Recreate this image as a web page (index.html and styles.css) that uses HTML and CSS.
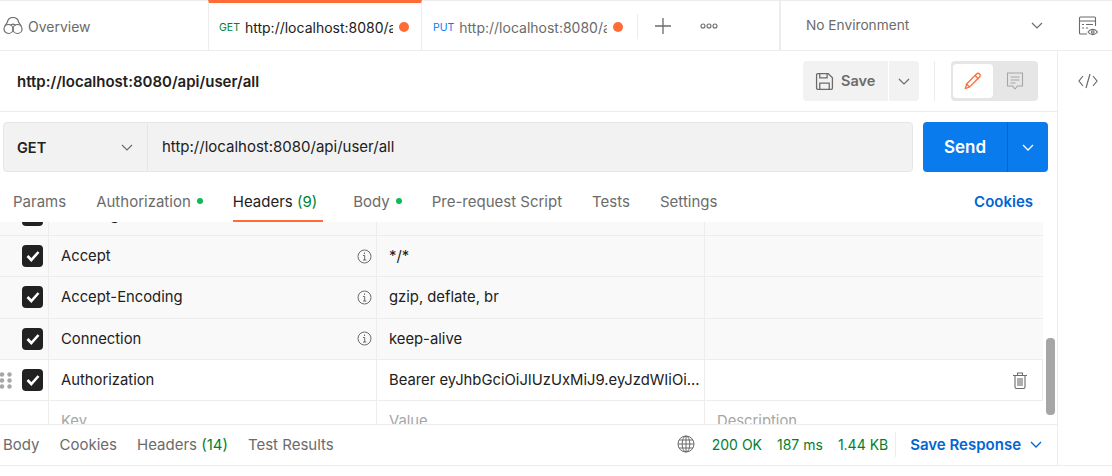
FILE: index.html
```html
<!DOCTYPE html>
<html>

<head>
  <title>Postman</title>
  <link rel="stylesheet" href="styles.css">
</head>

<body>
  <div id="topbar">
    <div class="overview">
      <svg class="ico-binoc" width="20" height="18" viewBox="0 0 20 18" fill="none" stroke="#6b6b6b" stroke-width="1.2">
        <circle cx="5.5" cy="12" r="4.5" />
        <circle cx="14.5" cy="12" r="4.5" />
        <path d="M1.500 9.500 4.500 5a5.500 4.500 0 0 1 11 0l3 4.500M7.500 8.500a3 3 0 0 1 5 0" />
      </svg>
      <span>Overview</span>
    </div>
    <div class="tab active">
      <span class="method get">GET</span>
      <span class="tab-url">http://localhost:8080/api/user/all</span>
      <span class="tab-dot"></span>
    </div>
    <div class="tab">
      <span class="method put">PUT</span>
      <span class="tab-url">http://localhost:8080/api/user/all</span>
      <span class="tab-dot"></span>
    </div>
    <div class="tab-actions">
      <svg width="16" height="16" viewBox="0 0 16 16" stroke="#6b6b6b" stroke-width="1.3">
        <path d="M8 0v16M0 8h16" />
      </svg>
      <svg width="18" height="6" viewBox="0 0 18 6" fill="none" stroke="#6b6b6b" stroke-width="1.1">
        <circle cx="3" cy="3" r="2" />
        <circle cx="9" cy="3" r="2" />
        <circle cx="15" cy="3" r="2" />
      </svg>
    </div>
    <div class="env">
      <span>No Environment</span>
      <svg class="chev" width="12" height="7" viewBox="0 0 12 7" fill="none" stroke="#6b6b6b" stroke-width="1.2">
        <path d="M1 1l5 5 5-5" />
      </svg>
    </div>
    <div class="env-icon">
      <svg width="20" height="20" viewBox="0 0 20 20" fill="none" stroke="#6b6b6b" stroke-width="1.1">
        <path d="M9 18H2.500a1 1 0 0 1-1-1V2a1 1 0 0 1 1-1h14a1 1 0 0 1 1 1v8" />
        <path d="M1.500 5h16M4 8.500h2M8 8.500h7M4 12h2M8 12h2" />
        <path d="M10 16c2.500-3.500 7-3.500 9.500 0-2.500 3.500-7 3.500-9.500 0z" />
        <circle cx="14.800" cy="16" r="1.300" />
      </svg>
    </div>
  </div>

  <div id="workspace">
    <div id="main">
      <div id="request-head">
        <span class="req-title">http://localhost:8080/api/user/all</span>
        <div class="head-actions">
          <div class="save-btn">
            <svg width="19" height="19" viewBox="0 0 18 18" fill="none" stroke="#6b6b6b" stroke-width="1.2">
              <path d="M1.500 2.500a1 1 0 0 1 1-1h10l4 4v10a1 1 0 0 1-1 1h-13a1 1 0 0 1-1-1z" />
              <path d="M4.500 1.500v4h7v-4M4.500 16.500v-6h9v6" />
            </svg>
            <span>Save</span>
          </div>
          <div class="save-more">
            <svg width="12" height="7" viewBox="0 0 12 7" fill="none" stroke="#6b6b6b" stroke-width="1.2">
              <path d="M1 1l5 5 5-5" />
            </svg>
          </div>
          <div class="head-divider"></div>
          <div class="mode-toggle">
            <div class="mode on">
              <svg width="18" height="18" viewBox="0 0 18 18" fill="none" stroke="#ff6c37" stroke-width="1.3">
                <path d="M1.500 16.500l1-4.500L12.500 2a2 2 0 0 1 3 3l-10 10z" />
                <path d="M11 3.500l3.500 3.500M2.500 12l3 3" />
              </svg>
            </div>
            <div class="mode">
              <svg width="18" height="19" viewBox="0 0 18 19" fill="none" stroke="#a6a6a6" stroke-width="1.1">
                <path d="M1.500 1h15v13h-5l-2.500 3-2.500-3h-5z" />
                <path d="M4.500 5h9M4.500 8h9M4.500 11h5" />
              </svg>
            </div>
          </div>
        </div>
      </div>

      <div id="url-row">
        <div class="url-box">
          <div class="method-select">
            <span>GET</span>
            <svg width="12" height="7" viewBox="0 0 12 7" fill="none" stroke="#6b6b6b" stroke-width="1.2">
              <path d="M1 1l5 5 5-5" />
            </svg>
          </div>
          <span class="url-text">http://localhost:8080/api/user/all</span>
        </div>
        <div class="send-btn">
          <span class="send-label">Send</span>
          <span class="send-more">
            <svg width="12" height="7" viewBox="0 0 12 7" fill="none" stroke="#fff" stroke-width="1.3">
              <path d="M1 1l5 5 5-5" />
            </svg>
          </span>
        </div>
      </div>

      <div id="req-tabs">
        <span class="req-tab">Params</span>
        <span class="req-tab">Authorization<i class="dot"></i></span>
        <span class="req-tab current">Headers <em>(9)</em></span>
        <span class="req-tab">Body<i class="dot"></i></span>
        <span class="req-tab">Pre-request Script</span>
        <span class="req-tab">Tests</span>
        <span class="req-tab">Settings</span>
        <span class="cookies">Cookies</span>
      </div>

      <div id="table-wrap">
        <div id="table">
          <div class="row first grey">
            <div class="cell check"><span class="box"><svg width="14" height="12" viewBox="0 0 14 12" fill="none" stroke="#fff" stroke-width="2.600"><path d="M1.500 6l3.800 4L12.500 2" /></svg></span></div>
            <div class="cell key">User-Agent</div>
            <div class="cell value">PostmanRuntime/7.29.0</div>
            <div class="cell desc"></div>
          </div>
          <div class="row grey">
            <div class="cell check"><span class="box"><svg width="14" height="12" viewBox="0 0 14 12" fill="none" stroke="#fff" stroke-width="2.600"><path d="M1.500 6l3.800 4L12.500 2" /></svg></span></div>
            <div class="cell key">Accept<svg class="info" width="15" height="15" viewBox="0 0 15 15" fill="none" stroke="#6b6b6b"><circle cx="7.500" cy="7.500" r="6.500" /><path d="M6 6.500h1.700V11M6 11h3.300M7.500 3.500v1.500" /></svg></div>
            <div class="cell value">*/*</div>
            <div class="cell desc"></div>
          </div>
          <div class="row grey">
            <div class="cell check"><span class="box"><svg width="14" height="12" viewBox="0 0 14 12" fill="none" stroke="#fff" stroke-width="2.600"><path d="M1.500 6l3.800 4L12.500 2" /></svg></span></div>
            <div class="cell key">Accept-Encoding<svg class="info" width="15" height="15" viewBox="0 0 15 15" fill="none" stroke="#6b6b6b"><circle cx="7.500" cy="7.500" r="6.500" /><path d="M6 6.500h1.700V11M6 11h3.300M7.500 3.500v1.500" /></svg></div>
            <div class="cell value">gzip, deflate, br</div>
            <div class="cell desc"></div>
          </div>
          <div class="row grey">
            <div class="cell check"><span class="box"><svg width="14" height="12" viewBox="0 0 14 12" fill="none" stroke="#fff" stroke-width="2.600"><path d="M1.500 6l3.800 4L12.500 2" /></svg></span></div>
            <div class="cell key">Connection<svg class="info" width="15" height="15" viewBox="0 0 15 15" fill="none" stroke="#6b6b6b"><circle cx="7.500" cy="7.500" r="6.500" /><path d="M6 6.500h1.700V11M6 11h3.300M7.500 3.500v1.500" /></svg></div>
            <div class="cell value">keep-alive</div>
            <div class="cell desc"></div>
          </div>
          <div class="row outlined">
            <div class="cell check">
              <svg class="drag" width="12" height="17" viewBox="0 0 12 17" fill="#a6a6a6">
                <circle cx="2" cy="2.500" r="2.200" /><circle cx="9.500" cy="2.500" r="2.200" />
                <circle cx="2" cy="8.500" r="2.200" /><circle cx="9.500" cy="8.500" r="2.200" />
                <circle cx="2" cy="14.500" r="2.200" /><circle cx="9.500" cy="14.500" r="2.200" />
              </svg>
              <span class="box"><svg width="14" height="12" viewBox="0 0 14 12" fill="none" stroke="#fff" stroke-width="2.600"><path d="M1.500 6l3.800 4L12.500 2" /></svg></span>
            </div>
            <div class="cell key">Authorization</div>
            <div class="cell value">Bearer eyJhbGciOiJIUzUxMiJ9.eyJzdWIiOi...</div>
            <div class="cell desc">
              <svg class="trash" width="14" height="17" viewBox="0 0 14 17" fill="none" stroke="#6b6b6b" stroke-width="1.100">
                <path d="M0 3.500h14M4.500 3.500V1h5v2.500M2 3.500V15a1.500 1.500 0 0 0 1.500 1.500h7A1.500 1.500 0 0 0 12 15V3.500M5 6v8M7 6v8M9 6v8" />
              </svg>
            </div>
          </div>
          <div class="row">
            <div class="cell check"></div>
            <div class="cell key placeholder">Key</div>
            <div class="cell value placeholder">Value</div>
            <div class="cell desc placeholder">Description</div>
          </div>
        </div>
        <div class="scroll-track"><div class="scroll-thumb"></div></div>
      </div>

      <div id="statusbar">
        <div class="res-tabs">
          <span>Body</span>
          <span>Cookies</span>
          <span>Headers <em>(14)</em></span>
          <span>Test Results</span>
        </div>
        <div class="res-meta">
          <svg class="globe" width="18" height="18" viewBox="0 0 18 18" fill="none" stroke="#6b6b6b" stroke-width="1">
            <circle cx="9" cy="9" r="8" />
            <ellipse cx="9" cy="9" rx="3.800" ry="8" />
            <path d="M9 1v16M1 9h16M2 5h14M2 13h14" />
          </svg>
          <span class="ok status">200 OK</span>
          <span class="ok time">187 ms</span>
          <span class="ok">1.44 KB</span>
          <span class="meta-divider"></span>
          <span class="save-res">Save Response</span>
          <svg width="12" height="7" viewBox="0 0 12 7" fill="none" stroke="#0265d2" stroke-width="1.300">
            <path d="M1 1l5 5 5-5" />
          </svg>
        </div>
      </div>
    </div>

    <div id="side">
      <svg width="20" height="16" viewBox="0 0 20 16" fill="none" stroke="#6b6b6b" stroke-width="1.200">
        <path d="M5 3 1 8l4 5M15 3l4 5-4 5M12 1 8 15" />
      </svg>
    </div>
  </div>
</body>

</html>
```

FILE: styles.css
```css
* {
  box-sizing: border-box;
}

body {
  margin: 0;
  font-family: Inter, 'Noto Sans', sans-serif;
  font-size: 15px;
  color: #212121;
  background-color: #fff;
}

em {
  font-style: normal;
  color: #007f31;
}

svg {
  display: block;
  flex: none;
}

/* top tab strip */
#topbar {
  display: flex;
  height: 51px;
  border-top: 1px solid #ededed;
  border-bottom: 1px solid #ededed;
  color: #6b6b6b;
  font-size: 14px;
}

.overview {
  width: 208px;
  display: flex;
  align-items: center;
  gap: 5px;
  padding: 1px 0 0 3px;
}

.tab {
  width: 215px;
  display: flex;
  align-items: center;
  padding: 3px 9px 0 11px;
}

.tab.active {
  width: 214px;
  height: 50px;
  margin-top: -1px;
  border-top: 3px solid #ff6c37;
  border-left: 1px solid #ededed;
  border-right: 1px solid #ededed;
  background: #fff;
  color: #212121;
  padding-left: 10px;
  padding-top: 1px;
}

.method {
  font-size: 10.500px;
  margin-right: 5px;
}

.get {
  color: #007f31;
}

.put {
  color: #097bed;
}

.tab-url {
  width: 148px;
  overflow: hidden;
  white-space: nowrap;
}

.tab-dot {
  width: 10px;
  height: 10px;
  margin-left: 6px;
  border-radius: 50%;
  background: #ff6c37;
}

.tab-actions {
  width: 142px;
  display: flex;
  align-items: center;
  gap: 29px;
  padding-left: 18px;
  position: relative;
}

.tab-actions::before {
  content: "";
  position: absolute;
  left: 0;
  top: 13px;
  height: 25px;
  border-left: 1px solid #ededed;
}

.env {
  width: 278px;
  display: flex;
  align-items: center;
  justify-content: space-between;
  padding: 0 14px 0 25px;
  border-left: 2px solid #ededed;
  font-size: 13.700px;
}

.env span {
  margin-top: -2px;
}

.env-icon {
  flex: 1;
  display: flex;
  justify-content: center;
  align-items: center;
  padding-left: 6px;
}

/* everything under the strip */
#workspace {
  display: flex;
  height: 415px;
  border-bottom: 1px solid #ededed;
}

#main {
  width: 1057px;
  flex: none;
  display: flex;
  flex-direction: column;
}

#side {
  flex: 1;
  border-left: 1px solid #ededed;
  display: flex;
  justify-content: center;
  padding: 22px 0 0 6px;
}

#request-head {
  height: 61px;
  flex: none;
  display: flex;
  align-items: center;
  justify-content: space-between;
  padding: 0 19px 0 17px;
  border-bottom: 1px solid #ededed;
}

.req-title {
  font-weight: 600;
}

.head-actions {
  display: flex;
  align-items: center;
  height: 40px;
}

.save-btn {
  width: 85px;
  height: 40px;
  display: flex;
  align-items: center;
  gap: 7px;
  padding-left: 12px;
  background: #f2f2f2;
  border-radius: 4px 0 0 4px;
  color: #6b6b6b;
  font-size: 14.500px;
  font-weight: 600;
}

.save-btn span {
  margin-top: -1px;
}

.save-more {
  width: 30px;
  height: 40px;
  margin-left: 1px;
  display: flex;
  align-items: center;
  justify-content: center;
  background: #f2f2f2;
  border-radius: 0 4px 4px 0;
}

.head-divider {
  width: 1px;
  height: 40px;
  margin: 0 16px 0 15px;
  background: #ededed;
}

.mode-toggle {
  width: 87px;
  height: 40px;
  display: flex;
  padding: 3px 2px;
  background: #e6e6e6;
  border-radius: 4px;
}

.mode {
  flex: 1;
  display: flex;
  align-items: center;
  justify-content: center;
}

.mode.on {
  flex: none;
  width: 40px;
  background: #fff;
  border-radius: 4px;
}

/* url bar */
#url-row {
  height: 50px;
  flex: none;
  margin-top: 10px;
  display: flex;
  padding: 0 9px 0 3px;
  gap: 10px;
}

.url-box {
  flex: 1;
  display: flex;
  align-items: center;
  background: #f2f2f2;
  border: 1px solid #e6e6e6;
  border-radius: 4px;
}

.method-select {
  width: 144px;
  height: 100%;
  display: flex;
  align-items: center;
  justify-content: space-between;
  padding: 0 14px 0 13px;
  border-right: 1px solid #e6e6e6;
  font-size: 14.500px;
  font-weight: 600;
}

.url-text {
  padding-left: 14px;
  margin-top: -2px;
}

.send-btn {
  width: 125px;
  display: flex;
  background: #097bed;
  border-radius: 4px;
  color: #fff;
}

.send-label {
  width: 85px;
  display: flex;
  align-items: center;
  justify-content: center;
  font-size: 17px;
  font-weight: 600;
  border-right: 1px solid #0265d2;
}

.send-more {
  flex: 1;
  display: flex;
  align-items: center;
  justify-content: center;
}

/* request tabs */
#req-tabs {
  height: 50px;
  flex: none;
  display: flex;
  align-items: center;
  gap: 30px;
  padding: 0 24px 0 13px;
  color: #6b6b6b;
}

.req-tab {
  height: 100%;
  display: flex;
  align-items: center;
  white-space: pre;
  padding-top: 8px;
}

.req-tab.current {
  color: #212121;
  padding: 10px 6px 0 0;
  border-bottom: 2px solid #ff6c37;
}

.dot {
  width: 6px;
  height: 6px;
  margin-left: 6px;
  border-radius: 50%;
  background: #0cbb52;
}

.cookies {
  margin-left: auto;
  padding-top: 8px;
  color: #0265d2;
  font-weight: 600;
}

/* headers table */
#table-wrap {
  height: 202px;
  flex: none;
  display: flex;
  overflow: hidden;
}

#table {
  width: 1043px;
  flex: none;
}

.row {
  display: flex;
  height: 41.330px;
  border-bottom: 1px solid #ededed;
  font-size: 14.800px;
}

.row.first {
  margin-top: -27.330px;
}

.row.grey {
  background: #f9f9f9;
}

.row.outlined {
  border-right: 1px solid #ededed;
}

.cell {
  display: flex;
  align-items: center;
  justify-content: space-between;
  padding: 0 4px 0 12px;
  border-right: 1px solid #ededed;
  width: 328px;
}

.cell.check {
  width: 49px;
  padding: 0 5px 0 0;
  position: relative;
  justify-content: flex-end;
}

.cell.desc {
  flex: 1;
  border-right: 0;
  padding-right: 15px;
  justify-content: flex-end;
}

.cell.placeholder {
  color: #a6a6a6;
  justify-content: flex-start;
}

.box {
  width: 21px;
  height: 22px;
  display: flex;
  align-items: center;
  justify-content: center;
  background: #212121;
  border-radius: 4px;
}

.drag {
  position: absolute;
  left: 0;
  top: 12px;
}

.scroll-track {
  flex: 1;
  padding: 116px 2px 0 3px;
}

.scroll-thumb {
  height: 77px;
  background: #a6a6a6;
  border-radius: 4px;
}

/* response bar */
#statusbar {
  flex: 1;
  display: flex;
  align-items: center;
  justify-content: space-between;
  padding: 0 15px 2px 3px;
  border-top: 1px solid #ededed;
  color: #6b6b6b;
}

.res-tabs {
  display: flex;
  gap: 20px;
}

.res-meta {
  display: flex;
  align-items: center;
  gap: 16px;
  font-size: 14px;
}

.res-meta .globe {
  margin-right: 1px;
}

.ok {
  color: #007f31;
}

.ok.status,
.ok.time {
  margin-right: -1px;
}

.meta-divider {
  width: 1px;
  height: 25px;
  margin: 0 -2px 0 -9px;
  background: #ededed;
}

.save-res {
  color: #0265d2;
  font-size: 15px;
  font-weight: 600;
  margin-right: -7px;
}
```
